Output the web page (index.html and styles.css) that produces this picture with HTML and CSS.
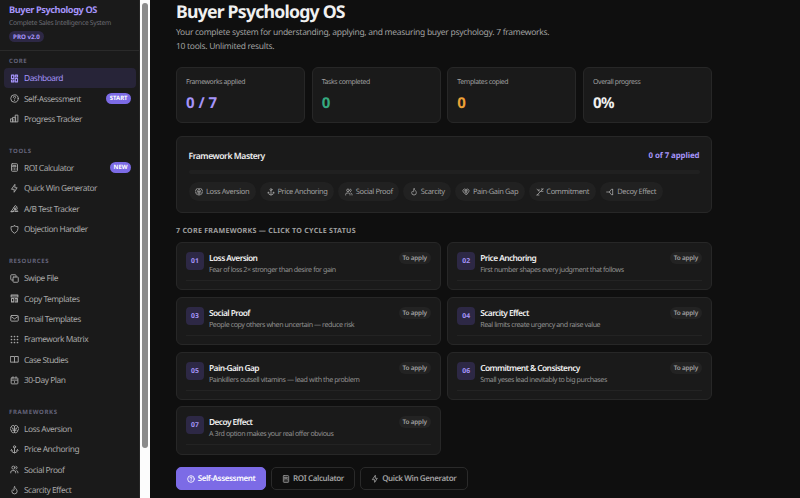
FILE: index.html
```html
<!DOCTYPE html>
<html lang="en">
<head>
    <meta charset="UTF-8">
    <meta name="viewport" content="width=device-width, initial-scale=1.0">
    <title>Buyer Psychology OS</title>
    <link rel="stylesheet" href="styles.css">
</head>
<body>
    <!-- Icon sprite -->
    <svg class="sprite" width="0" height="0">
        <symbol id="i-dashboard" viewBox="0 0 24 24"><path d="M4 3h6v9H4zM14 3h6v5h-6zM14 12h6v9h-6zM4 16h6v5H4z" stroke-width="3"/></symbol>
        <symbol id="i-assess" viewBox="0 0 24 24"><circle cx="12" cy="12" r="10"/><path d="M9 9a3 3 0 0 1 6 0c0 2-3 2-3 4M12 16.500v.5"/></symbol>
        <symbol id="i-bars" viewBox="0 0 24 24"><path d="M2 13h6v8H2zM8 9h7v12H8zM15 3h6v18h-6z"/></symbol>
        <symbol id="i-calc" viewBox="0 0 24 24"><rect x="4" y="2" width="16" height="20" rx="2"/><path d="M8 7h8v3H8zM8 14v.01M12 14v.01M16 14v.01M8 18v.01M12 18v.01M16 18v.01"/></symbol>
        <symbol id="i-bolt" viewBox="0 0 24 24"><path d="M13 2v8h6l-8 12v-8H5z"/></symbol>
        <symbol id="i-ab" viewBox="0 0 24 24"><path d="M3 20 14 4l4 3L8 20zM3 20h7M10 10l5 4M16 14l5 6h-7zM19 10v3"/></symbol>
        <symbol id="i-shield" viewBox="0 0 24 24"><path d="M12 2c3 2 6 2.500 9 2 1 8-1 14-9 18C4 18 2 12 3 4c3 .5 6 0 9-2z"/></symbol>
        <symbol id="i-copy" viewBox="0 0 24 24"><rect x="8" y="8" width="14" height="14" rx="2"/><path d="M16 8V4a2 2 0 0 0-2-2H4a2 2 0 0 0-2 2v10a2 2 0 0 0 2 2h4"/></symbol>
        <symbol id="i-template" viewBox="0 0 24 24"><path d="M3 3h18v5H3zM4 12h6v9H4zM14 12h6M14 16h6M14 21h6M20 12v9" stroke-width="2.800"/></symbol>
        <symbol id="i-mail" viewBox="0 0 24 24"><rect x="2" y="4" width="20" height="15" rx="2"/><path d="m3 7 9 6 9-6"/></symbol>
        <symbol id="i-grid" viewBox="0 0 24 24"><path d="M4 4v.01M12 4v.01M20 4v.01M4 12v.01M12 12v.01M20 12v.01M4 20v.01M12 20v.01M20 20v.01" stroke-width="4.500"/></symbol>
        <symbol id="i-book" viewBox="0 0 24 24"><path d="M2 4h9l1 1 1-1h9v15h-9l-1 1-1-1H2zM12 5v14"/></symbol>
        <symbol id="i-calendar" viewBox="0 0 24 24"><rect x="3" y="5" width="18" height="16" rx="2"/><path d="M16 2v4M8 2v4M4 11h16M12 15v2"/></symbol>
        <symbol id="i-brain" viewBox="0 0 24 24"><path d="M12 4a4 4 0 0 0-8 2 4 4 0 0 0 0 8 4 4 0 0 0 4 6 3 3 0 0 0 4 0 3 3 0 0 0 4 0 4 4 0 0 0 4-6 4 4 0 0 0 0-8 4 4 0 0 0-8-2zM12 4v16M7 8v3h4M17 8v3h-4M8 15h8"/></symbol>
        <symbol id="i-anchor" viewBox="0 0 24 24"><path d="M12 8v13M4 13a8 8 0 0 0 16 0M2 14l2-2 2 2M18 14l2-2 2 2"/><circle cx="12" cy="5" r="3"/></symbol>
        <symbol id="i-users" viewBox="0 0 24 24"><circle cx="9" cy="7" r="4"/><path d="M2 21v-2a4 4 0 0 1 4-4h5a4 4 0 0 1 4 4v2M16 3.200a4 4 0 0 1 0 7.700M21 21v-2a4 4 0 0 0-3-3.800"/></symbol>
        <symbol id="i-flame" viewBox="0 0 24 24"><path d="M12 2c0 4 7 6 7 12a7 7 0 0 1-14 0c0-2 1-3 2-4 1 2 4 2 4 0s-1-5 1-8z"/></symbol>
        <symbol id="i-gap" viewBox="0 0 24 24"><path d="M12 20 4 12a5 5 0 0 1 8-7 5 5 0 0 1 8 7zM8 8h8M9 12h6M12 8v8"/></symbol>
        <symbol id="i-stairs" viewBox="0 0 24 24"><path d="M3 21 21 3M3 4l6 5M9 4v5M3 21h6M14 10h7M16 3h5"/></symbol>
        <symbol id="i-split" viewBox="0 0 24 24"><path d="M2 12h9M20 4h-4l-6 8 6 8h4M20 4v16"/></symbol>
    </svg>

    <aside class="sidebar">
        <div class="brand">
            <div class="brand-name">Buyer Psychology OS</div>
            <div class="brand-sub">Complete Sales Intelligence System</div>
            <span class="version">PRO v2.0</span>
        </div>
        <nav>
            <div class="nav-label">Core</div>
            <a class="nav-item active"><svg><use href="#i-dashboard"/></svg><span>Dashboard</span></a>
            <a class="nav-item"><svg><use href="#i-assess"/></svg><span>Self-Assessment</span><b>START</b></a>
            <a class="nav-item"><svg><use href="#i-bars"/></svg><span>Progress Tracker</span></a>

            <div class="nav-label">Tools</div>
            <a class="nav-item"><svg><use href="#i-calc"/></svg><span>ROI Calculator</span><b>NEW</b></a>
            <a class="nav-item"><svg><use href="#i-bolt"/></svg><span>Quick Win Generator</span></a>
            <a class="nav-item"><svg><use href="#i-ab"/></svg><span>A/B Test Tracker</span></a>
            <a class="nav-item"><svg><use href="#i-shield"/></svg><span>Objection Handler</span></a>

            <div class="nav-label">Resources</div>
            <a class="nav-item"><svg><use href="#i-copy"/></svg><span>Swipe File</span></a>
            <a class="nav-item"><svg><use href="#i-template"/></svg><span>Copy Templates</span></a>
            <a class="nav-item"><svg><use href="#i-mail"/></svg><span>Email Templates</span></a>
            <a class="nav-item"><svg><use href="#i-grid"/></svg><span>Framework Matrix</span></a>
            <a class="nav-item"><svg><use href="#i-book"/></svg><span>Case Studies</span></a>
            <a class="nav-item"><svg><use href="#i-calendar"/></svg><span>30-Day Plan</span></a>

            <div class="nav-label">Frameworks</div>
            <a class="nav-item"><svg><use href="#i-brain"/></svg><span>Loss Aversion</span></a>
            <a class="nav-item"><svg><use href="#i-anchor"/></svg><span>Price Anchoring</span></a>
            <a class="nav-item"><svg><use href="#i-users"/></svg><span>Social Proof</span></a>
            <a class="nav-item"><svg><use href="#i-flame"/></svg><span>Scarcity Effect</span></a>
        </nav>
    </aside>
    <div class="scrollbar"><div class="thumb"></div></div>

    <main>
        <h1>Buyer Psychology OS</h1>
        <p class="intro">Your complete system for understanding, applying, and measuring buyer psychology. 7 frameworks.<br>10 tools. Unlimited results.</p>

        <section class="stats">
            <div class="card stat"><span>Frameworks applied</span><strong class="purple">0 / 7</strong></div>
            <div class="card stat"><span>Tasks completed</span><strong class="green">0</strong></div>
            <div class="card stat"><span>Templates copied</span><strong class="orange">0</strong></div>
            <div class="card stat"><span>Overall progress</span><strong>0%</strong></div>
        </section>

        <section class="card mastery">
            <div class="mastery-head">
                <h2>Framework Mastery</h2>
                <span>0 of 7 applied</span>
            </div>
            <div class="track"></div>
            <div class="chips">
                <span class="chip"><svg><use href="#i-brain"/></svg>Loss Aversion</span>
                <span class="chip"><svg><use href="#i-anchor"/></svg>Price Anchoring</span>
                <span class="chip"><svg><use href="#i-users"/></svg>Social Proof</span>
                <span class="chip"><svg><use href="#i-flame"/></svg>Scarcity</span>
                <span class="chip"><svg><use href="#i-gap"/></svg>Pain-Gain Gap</span>
                <span class="chip"><svg><use href="#i-stairs"/></svg>Commitment</span>
                <span class="chip"><svg><use href="#i-split"/></svg>Decoy Effect</span>
            </div>
        </section>

        <h3>7 core frameworks — click to cycle status</h3>
        <section class="frameworks">
            <div class="card framework">
                <div class="num">01</div>
                <div class="info"><h4>Loss Aversion</h4><p>Fear of loss 2× stronger than desire for gain</p></div>
                <span class="status">To apply</span>
                <div class="line"></div>
            </div>
            <div class="card framework">
                <div class="num">02</div>
                <div class="info"><h4>Price Anchoring</h4><p>First number shapes every judgment that follows</p></div>
                <span class="status">To apply</span>
                <div class="line"></div>
            </div>
            <div class="card framework">
                <div class="num">03</div>
                <div class="info"><h4>Social Proof</h4><p>People copy others when uncertain — reduce risk</p></div>
                <span class="status">To apply</span>
                <div class="line"></div>
            </div>
            <div class="card framework">
                <div class="num">04</div>
                <div class="info"><h4>Scarcity Effect</h4><p>Real limits create urgency and raise value</p></div>
                <span class="status">To apply</span>
                <div class="line"></div>
            </div>
            <div class="card framework">
                <div class="num">05</div>
                <div class="info"><h4>Pain-Gain Gap</h4><p>Painkillers outsell vitamins — lead with the problem</p></div>
                <span class="status">To apply</span>
                <div class="line"></div>
            </div>
            <div class="card framework">
                <div class="num">06</div>
                <div class="info"><h4>Commitment &amp; Consistency</h4><p>Small yeses lead inevitably to big purchases</p></div>
                <span class="status">To apply</span>
                <div class="line"></div>
            </div>
            <div class="card framework">
                <div class="num">07</div>
                <div class="info"><h4>Decoy Effect</h4><p>A 3rd option makes your real offer obvious</p></div>
                <span class="status">To apply</span>
                <div class="line"></div>
            </div>
        </section>

        <div class="actions">
            <button class="primary"><svg><use href="#i-assess"/></svg>Self-Assessment</button>
            <button><svg><use href="#i-calc"/></svg>ROI Calculator</button>
            <button><svg><use href="#i-bolt"/></svg>Quick Win Generator</button>
        </div>
    </main>
</body>
</html>
```
FILE: styles.css
```css
* {
    box-sizing: border-box;
    margin: 0;
    padding: 0;
}
body {
    font-family: "Noto Sans", "Open Sans", sans-serif;
    text-rendering: geometricPrecision;
    display: flex;
    height: 498px;
    overflow: hidden;
    background-color: #0f0f0f;
    color: #f0f0f0;
    white-space: nowrap;
}
svg {
    fill: none;
    stroke: currentColor;
    stroke-width: 2.5;
    stroke-linecap: round;
    stroke-linejoin: round;
    flex: none;
}
.sprite {
    position: absolute;
}

/* Sidebar */
.sidebar {
    width: 140px;
    flex: none;
    background-color: #1a1a1a;
    border-right: 1px solid #262626;
    overflow: hidden;
}
.brand {
    height: 51px;
    padding: 3px 9px 0;
    border-bottom: 1px solid #2a2a2a;
}
.brand-name {
    font-size: 9.2px;
    line-height: 13px;
    font-weight: 700;
    letter-spacing: -0.4px;
    color: #a594f9;
}
.brand-sub {
    font-size: 6.7px;
    line-height: 13px;
    letter-spacing: -0.27px;
    color: #6c6c74;
}
.version {
    display: block;
    width: 35px;
    height: 11px;
    margin-top: 2px;
    border-radius: 6px;
    background-color: #2d2845;
    color: #a594f9;
    font-size: 6.2px;
    line-height: 11px;
    font-weight: 700;
    text-align: center;
}
nav {
    padding: 0 3px 0 4px;
}
.nav-label {
    height: 12px;
    margin-top: 16.6px;
    padding-left: 5px;
    font-size: 6px;
    line-height: 11px;
    font-weight: 700;
    letter-spacing: 0.65px;
    text-transform: uppercase;
    color: #64647a;
}
.nav-label:first-child {
    margin-top: 5px;
}
.nav-item {
    display: flex;
    align-items: center;
    height: 20.4px;
    padding: 0 5px 0 6px;
    border-radius: 4px;
    font-size: 8.4px;
    letter-spacing: -0.48px;
    color: #a8a8a8;
}
.nav-item span {
    padding-top: 1px;
}
.nav-item svg {
    width: 9px;
    height: 9px;
    margin-right: 5px;
}
.nav-item.active {
    background-color: #272438;
    color: #a594f9;
}
.nav-item b {
    height: 11px;
    margin-left: auto;
    padding: 0 3.5px;
    border-radius: 6px;
    background-color: #7c6be6;
    color: #fff;
    font-size: 6px;
    line-height: 11px;
    letter-spacing: -0.05px;
}
.scrollbar {
    width: 10px;
    flex: none;
    padding: 3px 2px 0;
    background-color: #fcfcfc;
}
.thumb {
    height: 445px;
    border-radius: 3px;
    background-color: #8b8b8b;
}

/* Main */
main {
    width: 562px;
    padding-left: 26px;
}
h1 {
    font-size: 17.7px;
    line-height: 25px;
    letter-spacing: -0.8px;
}
.intro {
    margin-top: 1px;
    font-size: 8.5px;
    line-height: 13.6px;
    letter-spacing: -0.29px;
    color: #a0a0a0;
}
.card {
    background-color: #1a1a1a;
    border: 1px solid #272727;
    border-radius: 6px;
}
.stats {
    display: grid;
    grid-template-columns: repeat(4, 1fr);
    gap: 6.7px;
    margin-top: 14px;
}
.stat {
    height: 56px;
    padding: 9px 9px 0;
}
.stat span {
    display: block;
    font-size: 6.9px;
    line-height: 12px;
    letter-spacing: -0.36px;
    color: #a0a0a0;
}
.stat strong {
    display: block;
    margin-top: 3px;
    font-size: 15px;
    line-height: 22px;
    letter-spacing: -0.5px;
}
.stat .purple {
    color: #a594f9;
    letter-spacing: 0;
}
.stat .green {
    color: #35a97f;
}
.stat .orange {
    color: #eda136;
}
.mastery {
    height: 76.5px;
    margin-top: 13px;
    padding: 12px 11.5px 0;
}
.mastery-head {
    display: flex;
    justify-content: space-between;
    line-height: 15px;
}
.mastery-head h2 {
    font-size: 8.6px;
    font-weight: 600;
    letter-spacing: -0.45px;
}
.mastery-head span {
    font-size: 7.9px;
    font-weight: 700;
    letter-spacing: -0.1px;
    color: #a594f9;
}
.track {
    height: 4px;
    margin-top: 6px;
    border-radius: 2px;
    background-color: #202020;
}
.chips {
    display: flex;
    gap: 4px;
    margin-top: 8px;
}
.chip {
    display: flex;
    align-items: center;
    padding: 1px 6.7px 0;
    height: 18.5px;
    border-radius: 10px;
    background-color: #212121;
    color: #a0a0a0;
    font-size: 7.5px;
    letter-spacing: -0.38px;
}
.chip svg {
    width: 8px;
    height: 8px;
    margin-right: 2.8px;
}
h3 {
    margin: 13.5px 0 5px;
    font-size: 7.1px;
    line-height: 11px;
    letter-spacing: 0.26px;
    text-transform: uppercase;
    color: #a0a0a0;
}
.frameworks {
    display: grid;
    grid-template-columns: 1fr 1fr;
    gap: 6.4px;
}
.framework {
    display: grid;
    grid-template-columns: 18px 1fr auto;
    column-gap: 5px;
    align-content: start;
    height: 48.3px;
    padding: 9px;
}
.num {
    height: 18px;
    border-radius: 4px;
    background-color: #2d2845;
    color: #a594f9;
    font-size: 6.8px;
    line-height: 18px;
    font-weight: 700;
    text-align: center;
}
.info h4 {
    font-size: 8.4px;
    line-height: 14px;
    font-weight: 600;
    letter-spacing: -0.58px;
}
.info p {
    font-size: 7.1px;
    line-height: 9px;
    letter-spacing: -0.42px;
    color: #929292;
}
.status {
    height: 12px;
    padding: 0 4px;
    border-radius: 6px;
    background-color: #232323;
    color: #a0a0a0;
    font-size: 6.4px;
    line-height: 12px;
    font-weight: 600;
    letter-spacing: -0.2px;
}
.line {
    grid-column: 1 / -1;
    height: 1px;
    margin-top: 5px;
    background-color: #232323;
}
.actions {
    display: flex;
    gap: 5px;
    margin-top: 12.5px;
}
button {
    display: flex;
    align-items: center;
    justify-content: center;
    width: 84px;
    height: 23px;
    border: 1px solid #2a2a2a;
    border-radius: 5px;
    background-color: transparent;
    color: #a0a0a0;
    font: 600 8px "Noto Sans", "Open Sans", sans-serif;
    letter-spacing: -0.38px;
    text-rendering: geometricPrecision;
}
button svg {
    width: 8px;
    height: 8px;
    margin-right: 3px;
}
button.primary {
    width: 90px;
    border-color: #7c6be6;
    background-color: #7c6be6;
    color: #fff;
}
button:last-child {
    width: 107.5px;
}
```
